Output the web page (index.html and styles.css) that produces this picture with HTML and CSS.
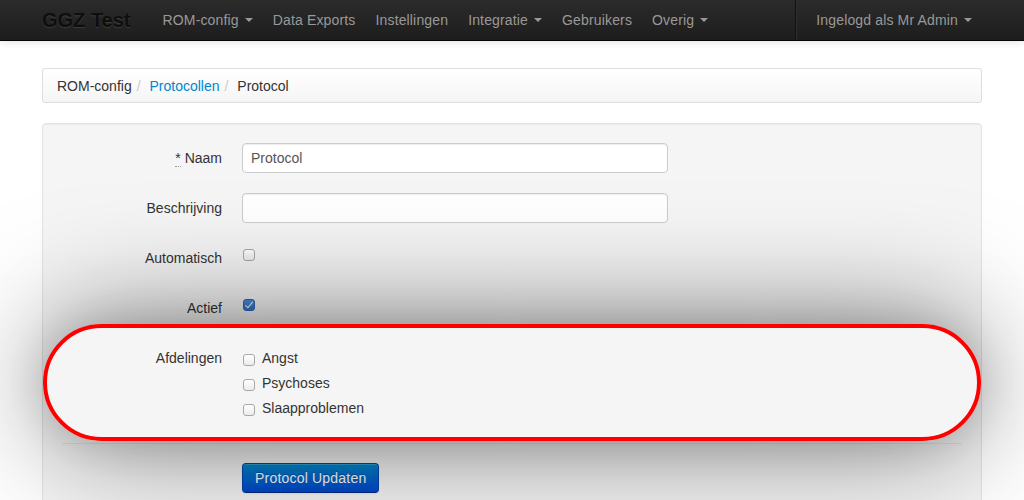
FILE: index.html
```html
<!DOCTYPE html>
<html lang="nl">
<head>
<meta charset="utf-8">
<title>GGZ Test - Protocol</title>
<link rel="stylesheet" href="styles.css">
</head>
<body>
<div class="navbar">
  <div class="container nav-inner">
    <a class="brand" href="#">GGZ Test</a>
    <ul class="nav">
      <li><a href="#">ROM-config <b class="caret"></b></a></li>
      <li><a href="#">Data Exports</a></li>
      <li><a href="#">Instellingen</a></li>
      <li><a href="#">Integratie <b class="caret"></b></a></li>
      <li><a href="#">Gebruikers</a></li>
      <li><a href="#">Overig <b class="caret"></b></a></li>
    </ul>
    <ul class="nav nav-right">
      <li class="divider-vertical"></li>
      <li><a href="#">Ingelogd als Mr Admin <b class="caret"></b></a></li>
    </ul>
  </div>
</div>

<div class="container page">
  <ul class="breadcrumb">
    <li>ROM-config<span class="divider">/</span></li>
    <li><a href="#">Protocollen</a><span class="divider">/</span></li>
    <li class="active">Protocol</li>
  </ul>

  <form class="well form-horizontal">
    <div class="control-group">
      <label class="control-label"><abbr title="verplicht">*</abbr> Naam</label>
      <div class="controls"><input class="text-input" type="text" value="Protocol"></div>
    </div>
    <div class="control-group">
      <label class="control-label">Beschrijving</label>
      <div class="controls"><input class="text-input" type="text" value=""></div>
    </div>
    <div class="control-group">
      <label class="control-label">Automatisch</label>
      <div class="controls"><input class="cb single" type="checkbox"></div>
    </div>
    <div class="control-group">
      <label class="control-label">Actief</label>
      <div class="controls"><input class="cb single" type="checkbox" checked></div>
    </div>
    <div class="control-group highlighted">
      <label class="control-label">Afdelingen</label>
      <div class="controls">
        <label class="checkbox"><input class="cb" type="checkbox">Angst</label>
        <label class="checkbox"><input class="cb" type="checkbox">Psychoses</label>
        <label class="checkbox"><input class="cb" type="checkbox">Slaapproblemen</label>
      </div>
      <div class="highlight"></div>
    </div>
    <div class="form-actions">
      <button type="button" class="btn-primary">Protocol Updaten</button>
    </div>
  </form>
</div>
</body>
</html>
```
FILE: styles.css
```css
* { box-sizing: border-box; }

body {
  margin: 0;
  font-family: "Liberation Sans", Helvetica, Arial, sans-serif;
  font-size: 14px;
  line-height: 20px;
  color: #333;
  background: #fff;
}

.container {
  width: 940px;
  margin: 0 auto;
}

/* Navbar */
.navbar {
  background: linear-gradient(#2b2b2b, #1d1d1d);
  border-bottom: 1px solid #050505;
  box-shadow: 0 1px 8px rgba(0, 0, 0, 0.12);
}

.nav-inner {
  display: flex;
  height: 40px;
}

.brand {
  padding: 10px 22px 10px 0;
  font-size: 20px;
  font-weight: 700;
  line-height: 20px;
  color: #0e0e0e;
  text-decoration: none;
  text-shadow: 0 1px 1px rgba(255, 255, 255, 0.12);
}

.nav {
  display: flex;
  list-style: none;
  margin: 0;
  padding: 0;
}

.nav a {
  display: block;
  padding: 10px;
  color: #999;
  text-decoration: none;
  line-height: 20px;
  letter-spacing: 0.15px;
}

.nav-right {
  margin-left: auto;
}

.divider-vertical {
  height: 40px;
  margin: 0 9px;
  border-left: 1px solid #111;
  border-right: 1px solid #2e2e2e;
}

.caret {
  display: inline-block;
  width: 0;
  height: 0;
  vertical-align: top;
  margin-top: 8px;
  margin-left: 2px;
  border-top: 4px solid #999;
  border-left: 4px solid transparent;
  border-right: 4px solid transparent;
}

/* Page */
.page {
  padding-top: 27px;
}

.breadcrumb {
  list-style: none;
  margin: 0 0 20px;
  padding: 7px 14px 6px;
  background: linear-gradient(#ffffff, #f5f5f5);
  border: 1px solid #dedede;
  border-radius: 3px;
  box-shadow: inset 0 1px 0 #fff;
}

.breadcrumb li {
  display: inline;
}

.breadcrumb a {
  color: #0088cc;
  text-decoration: none;
}

.breadcrumb .divider {
  padding: 0 5px;
  color: #ccc;
}

/* Well / form */
.well {
  margin: 0 0 20px;
  padding: 19px;
  background: #f5f5f5;
  border: 1px solid #e3e3e3;
  border-radius: 4px;
  box-shadow: inset 0 1px 1px rgba(0, 0, 0, 0.05);
}

.control-group {
  display: grid;
  grid-template-columns: 160px 1fr;
  column-gap: 20px;
  min-height: 30px;
  margin-bottom: 20px;
}

.control-label {
  padding-top: 5px;
  text-align: right;
}

abbr {
  text-decoration: none;
  border-bottom: 1px dotted #999;
  cursor: help;
}

.text-input {
  display: block;
  width: 426px;
  height: 30px;
  padding: 4px 8px;
  font-family: inherit;
  font-size: 14px;
  line-height: 20px;
  color: #555;
  background: #fff;
  border: 1px solid #ccc;
  border-radius: 4px;
  box-shadow: inset 0 1px 1px rgba(0, 0, 0, 0.075);
  margin: 0;
}

.cb {
  appearance: none;
  -webkit-appearance: none;
  position: relative;
  width: 12px;
  height: 12px;
  margin: 0;
  flex: none;
  border: 1px solid #a8a8a8;
  border-radius: 3px;
  background: linear-gradient(#ffffff, #ececec);
}

.cb:checked {
  background: linear-gradient(#4a90e0, #2f74cc);
  border-color: #2a68b8;
}

.cb:checked::after {
  content: "";
  position: absolute;
  left: 3px;
  top: 0px;
  width: 3px;
  height: 7px;
  border: solid #fff;
  border-width: 0 1.5px 1.5px 0;
  transform: rotate(40deg);
}

.cb.single {
  display: block;
  margin: 6px 0 0 1px;
}

.checkbox {
  display: flex;
  align-items: flex-start;
  padding-top: 5px;
}

.checkbox .cb {
  margin: 6px 7px 0 1px;
}

/* Highlight overlay */
.highlighted {
  position: relative;
}

.highlight {
  position: absolute;
  top: -19px;
  left: -19px;
  right: -19px;
  bottom: -23px;
  border: 4px solid #ff0000;
  border-radius: 60px;
  box-shadow: 0 0 120px rgba(0, 0, 0, 0.55), 0 0 40px rgba(0, 0, 0, 0.12);
  pointer-events: none;
  z-index: 10;
}

.form-actions {
  margin-top: 25px;
  padding: 19px 20px 20px 180px;
  border-top: 1px solid #e5e5e5;
}

.btn-primary {
  display: inline-block;
  padding: 4px 12px;
  font-family: inherit;
  font-size: 14px;
  line-height: 20px;
  letter-spacing: 0.2px;
  color: #fff;
  text-shadow: 0 -1px 0 rgba(0, 0, 0, 0.25);
  background: linear-gradient(#0088cc, #0044cc);
  border: 1px solid #0044aa;
  border-bottom-color: #002a80;
  border-radius: 4px;
  box-shadow: inset 0 1px 0 rgba(255, 255, 255, 0.2), 0 1px 2px rgba(0, 0, 0, 0.05);
  cursor: pointer;
}
```
